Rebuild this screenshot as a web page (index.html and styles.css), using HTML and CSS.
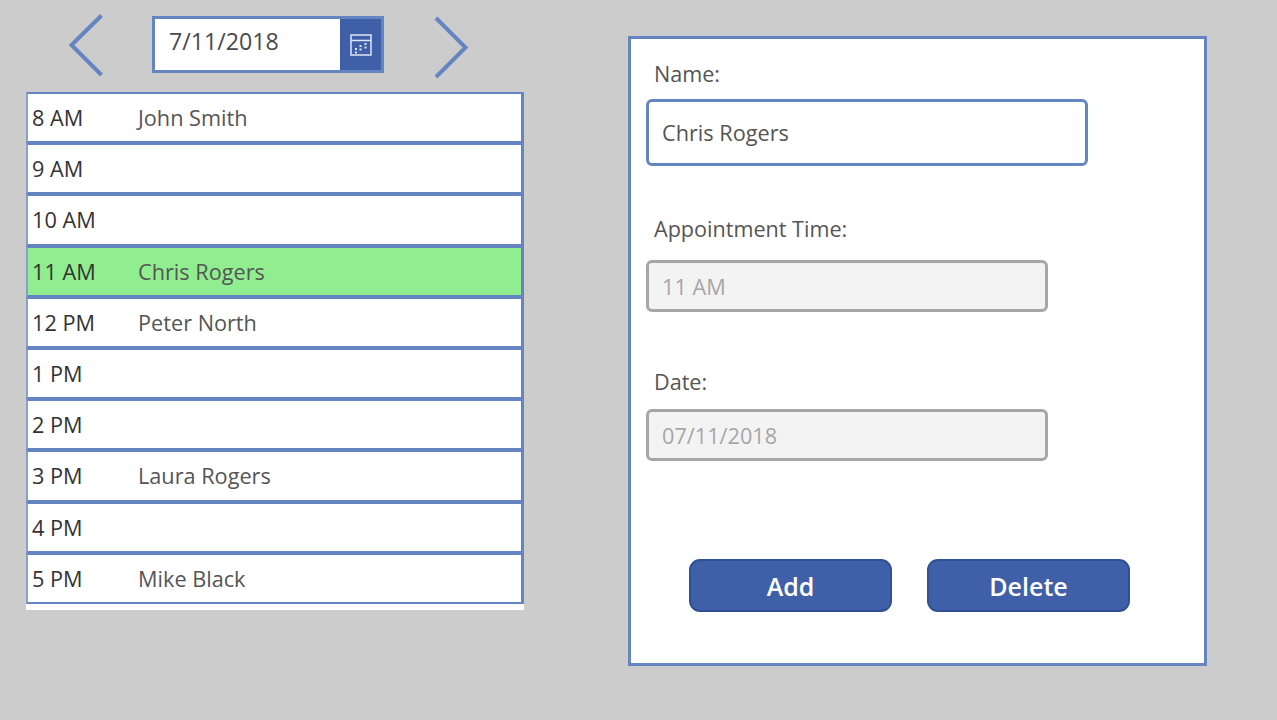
FILE: index.html
```html
<!DOCTYPE html>
<html lang="en">
<head>
<meta charset="utf-8">
<title>Appointments</title>
<link rel="stylesheet" href="styles.css">
</head>
<body>
<main class="screen">
  <section class="schedule">
    <div class="date-bar">
      <svg class="chevron chevron-prev" width="36" height="64" viewBox="0 0 36 64"><path d="M33.500 1.500 L3.500 31 L33.500 61" fill="none" stroke="#6484c2" stroke-width="4"/></svg>
      <div class="date-picker">
        <span class="date-value">7/11/2018</span>
        <span class="date-button">
          <svg width="22" height="22" viewBox="0 0 22 22"><rect x="1" y="1" width="20" height="20" fill="none" stroke="#dfe6f4" stroke-width="1.500"/><path d="M1 6.500 H21" stroke="#dfe6f4" stroke-width="1.500"/><path d="M5 14h2v2H5zM5 17.500h2v2H5zM9.500 11h2v2h-2zM9.500 14.500h2v2h-2zM14.500 9h2v2h-2zM14.500 12.500h2v2h-2z" fill="#dfe6f4"/></svg>
        </span>
      </div>
      <svg class="chevron chevron-next" width="36" height="64" viewBox="0 0 36 64"><path d="M3 2 L32.500 31.500 L3 61" fill="none" stroke="#6484c2" stroke-width="4"/></svg>
    </div>
    <ul class="slots">
      <li class="slot"><span class="time">8 AM</span><span class="who">John Smith</span></li>
      <li class="slot"><span class="time">9 AM</span></li>
      <li class="slot"><span class="time">10 AM</span></li>
      <li class="slot slot-active"><span class="time">11 AM</span><span class="who">Chris Rogers</span></li>
      <li class="slot"><span class="time">12 PM</span><span class="who">Peter North</span></li>
      <li class="slot"><span class="time">1 PM</span></li>
      <li class="slot"><span class="time">2 PM</span></li>
      <li class="slot"><span class="time">3 PM</span><span class="who">Laura Rogers</span></li>
      <li class="slot"><span class="time">4 PM</span></li>
      <li class="slot"><span class="time">5 PM</span><span class="who">Mike Black</span></li>
    </ul>
  </section>
  <section class="panel">
    <div class="field field-name">
      <div class="label">Name:</div>
      <div class="input input-name">Chris Rogers</div>
    </div>
    <div class="field field-time">
      <div class="label">Appointment Time:</div>
      <div class="input input-off">11 AM</div>
    </div>
    <div class="field field-date">
      <div class="label">Date:</div>
      <div class="input input-off">07/11/2018</div>
    </div>
    <div class="actions">
      <button class="action" type="button">Add</button>
      <button class="action" type="button">Delete</button>
    </div>
  </section>
</main>
</body>
</html>
```

FILE: styles.css
```css
* { box-sizing: border-box; }
html, body { margin: 0; height: 100%; }
body {
  background: #cccccc;
  font-family: "Open Sans", sans-serif;
  overflow: hidden;
}
.screen { display: flex; align-items: flex-start; height: 720px; padding-left: 26px; }
.schedule { width: 498px; }
.date-bar { display: flex; align-items: flex-start; height: 92px; padding-left: 42px; }
.chevron { display: block; flex: none; }
.chevron-prev { margin-top: 14px; }
.chevron-next { margin-top: 16px; margin-left: 49px; }
.date-picker {
  display: flex;
  width: 232px;
  height: 57px;
  margin-top: 16px;
  margin-left: 48px;
  border: 3px solid #6484c2;
  background: #ffffff;
}
.date-value {
  flex: 1;
  padding-left: 14px;
  font-size: 23.200px;
  line-height: 45px;
  color: #494949;
}
.date-button {
  display: flex;
  align-items: center;
  justify-content: center;
  width: 41px;
  background: #3f5fa9;
}
.slots { margin: 0; padding: 0; list-style: none; height: 518px; background: #ffffff; }
.slot {
  display: flex;
  align-items: center;
  height: 51.2px;
  padding-left: 4px;
  border: 2px solid #6484c2;
  border-left-color: #86a0d0;
  border-right-width: 3px;
  font-size: 21.700px;
}
.slot-active { background: #90ee90; }
.time { width: 106px; color: #333333; }
.who { color: #555555; }
.panel {
  display: flex;
  flex-direction: column;
  width: 579px;
  height: 630px;
  margin-top: 36px;
  margin-left: 104px;
  padding: 20px 15px 0;
  border: 3px solid #6484c2;
  background: #ffffff;
}
.label {
  padding-left: 8px;
  font-size: 21.600px;
  line-height: 30px;
  color: #555555;
}
.field-name .label { margin-bottom: 10px; }
.field-time { margin-top: 48px; }
.field-time .label { margin-bottom: 16px; }
.field-date { margin-top: 55px; }
.field-date .label { margin-bottom: 12px; }
.input {
  display: flex;
  align-items: center;
  padding-left: 13px;
  border-radius: 6px;
  font-size: 21.700px;
}
.input-name {
  width: 442px;
  height: 67px;
  border: 3px solid #6484c2;
  color: #555555;
}
.input-off {
  width: 402px;
  height: 52px;
  border: 3px solid #a6a6a6;
  background: #f3f3f3;
  color: #a6a6a6;
}
.actions { display: flex; gap: 35px; margin-top: 98px; padding-left: 43px; }
.action {
  width: 203px;
  height: 53px;
  padding: 0;
  border: 2px solid #2f5093;
  border-radius: 11px;
  background: #3f5fa9;
  color: #ffffff;
  font-family: inherit;
  font-size: 25px;
  font-weight: 600;
}
```
